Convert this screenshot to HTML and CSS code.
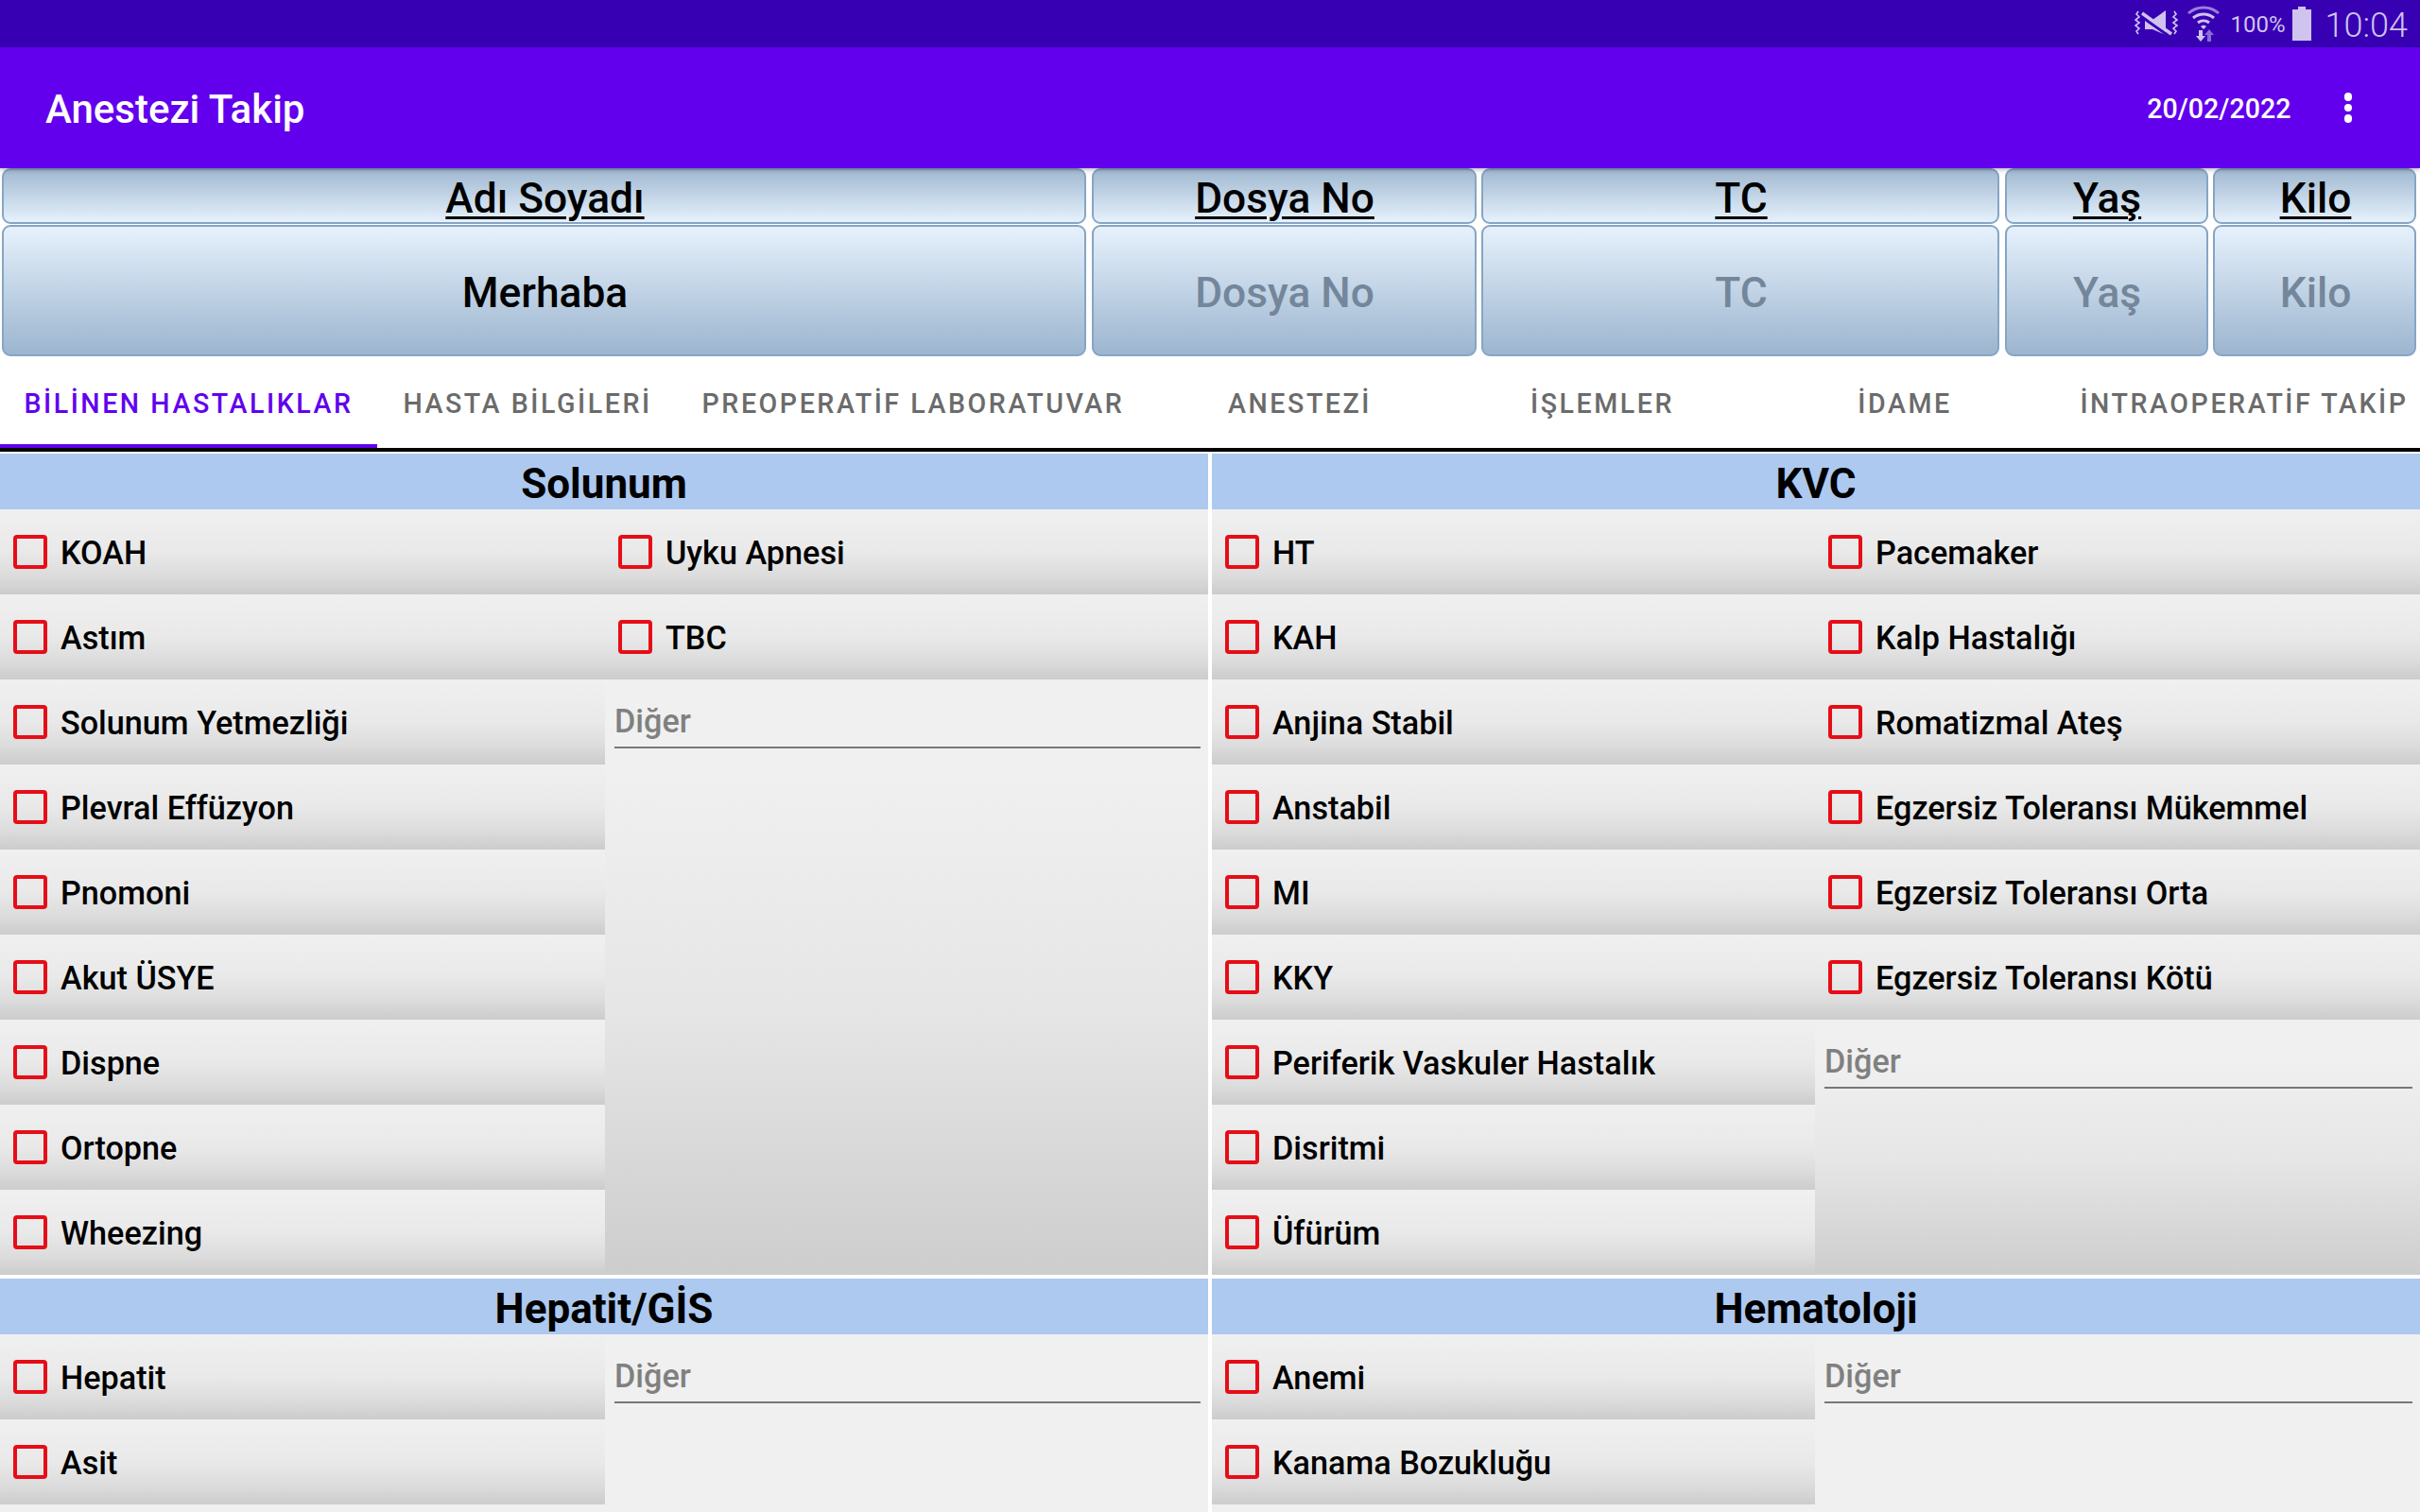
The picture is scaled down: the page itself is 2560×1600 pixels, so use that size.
FILE: index.html
```html
<!DOCTYPE html>
<html lang="tr">
<head>
  <meta charset="UTF-8" />
  <title>Anestezi Takip</title>
  <link rel="stylesheet" href="styles.css">
</head>
<body>

  <div class="status-bar">
    <svg class="st-mute" width="48" height="32" viewBox="0 0 48 32">
      <path d="M11 12h8L33 2v26L19 22h-8z" fill="#d0c3ee"/>
      <path d="M8 9l31 22" stroke="#3700b3" stroke-width="3"/>
      <path d="M8 5l31 22" stroke="#d0c3ee" stroke-width="3.5"/>
      <path d="M4 3L2 6l3 3-4 3 4 3-4 3 4 3-3 3 2 3M42 3l2 3-3 3 4 3-4 3 4 3-4 3 3 3-2 3" fill="none" stroke="#d0c3ee" stroke-width="1.6"/>
    </svg>
    <svg class="st-wifi" width="34" height="38" viewBox="0 0 34 38">
      <path d="M1 8a24 24 0 0 1 32 0" fill="none" stroke="#9a7fdc" stroke-width="3"/>
      <path d="M6 13a17 17 0 0 1 22 0" fill="none" stroke="#d0c3ee" stroke-width="3"/>
      <path d="M11 18a10 10 0 0 1 12 0" fill="none" stroke="#d0c3ee" stroke-width="3"/>
      <path d="M14 22a4 4 0 0 1 6 0l-3 3z" fill="#d0c3ee"/>
      <path d="M12 26h4v6h3l-5 6-5-6h3z" fill="#d0c3ee"/>
      <path d="M21 38v-7h-3l5-6 5 6h-3v7z" fill="#8a6cd6"/>
    </svg>
    <span class="st-pct">100%</span>
    <svg class="st-batt" width="20" height="36" viewBox="0 0 20 36">
      <path d="M6 0h8v3h6v33H0V3h6z" fill="#d0c3ee"/>
    </svg>
    <span class="st-time">10:04</span>
  </div>

  <div class="app-bar">
    <div class="app-title">Anestezi Takip</div>
    <div class="app-date">20/02/2022</div>
    <div class="app-menu"><i></i><i></i><i></i></div>
  </div>

  <div class="patient">
    <div class="cell cell-top">Adı Soyadı</div>
    <div class="cell cell-top">Dosya No</div>
    <div class="cell cell-top">TC</div>
    <div class="cell cell-top">Yaş</div>
    <div class="cell cell-top">Kilo</div>
    <div class="cell cell-val">Merhaba</div>
    <div class="cell cell-val hint">Dosya No</div>
    <div class="cell cell-val hint">TC</div>
    <div class="cell cell-val hint">Yaş</div>
    <div class="cell cell-val hint">Kilo</div>
  </div>

  <div class="tabs">
    <div class="tab tab-1 active">BİLİNEN HASTALIKLAR</div>
    <div class="tab tab-2">HASTA BİLGİLERİ</div>
    <div class="tab tab-3">PREOPERATİF LABORATUVAR</div>
    <div class="tab tab-4">ANESTEZİ</div>
    <div class="tab tab-4">İŞLEMLER</div>
    <div class="tab tab-4">İDAME</div>
    <div class="tab tab-5">İNTRAOPERATİF TAKİP</div>
  </div>

  <div class="sections">
    <section class="section">
      <h2>Solunum</h2>
      <div class="cols cols-left">
        <div class="col">
          <label class="row"><span class="box"></span>KOAH</label>
          <label class="row"><span class="box"></span>Astım</label>
          <label class="row"><span class="box"></span>Solunum Yetmezliği</label>
          <label class="row"><span class="box"></span>Plevral Effüzyon</label>
          <label class="row"><span class="box"></span>Pnomoni</label>
          <label class="row"><span class="box"></span>Akut ÜSYE</label>
          <label class="row"><span class="box"></span>Dispne</label>
          <label class="row"><span class="box"></span>Ortopne</label>
          <label class="row"><span class="box"></span>Wheezing</label>
        </div>
        <div class="col">
          <label class="row"><span class="box"></span>Uyku Apnesi</label>
          <label class="row"><span class="box"></span>TBC</label>
          <div class="rest"><div class="other">Diğer</div></div>
        </div>
      </div>
    </section>

    <section class="section">
      <h2>KVC</h2>
      <div class="cols cols-right">
        <div class="col">
          <label class="row"><span class="box"></span>HT</label>
          <label class="row"><span class="box"></span>KAH</label>
          <label class="row"><span class="box"></span>Anjina Stabil</label>
          <label class="row"><span class="box"></span>Anstabil</label>
          <label class="row"><span class="box"></span>MI</label>
          <label class="row"><span class="box"></span>KKY</label>
          <label class="row"><span class="box"></span>Periferik Vaskuler Hastalık</label>
          <label class="row"><span class="box"></span>Disritmi</label>
          <label class="row"><span class="box"></span>Üfürüm</label>
        </div>
        <div class="col">
          <label class="row"><span class="box"></span>Pacemaker</label>
          <label class="row"><span class="box"></span>Kalp Hastalığı</label>
          <label class="row"><span class="box"></span>Romatizmal Ateş</label>
          <label class="row"><span class="box"></span>Egzersiz Toleransı Mükemmel</label>
          <label class="row"><span class="box"></span>Egzersiz Toleransı Orta</label>
          <label class="row"><span class="box"></span>Egzersiz Toleransı Kötü</label>
          <div class="rest"><div class="other">Diğer</div></div>
        </div>
      </div>
    </section>

    <section class="section">
      <h2>Hepatit/GİS</h2>
      <div class="cols cols-left">
        <div class="col">
          <label class="row"><span class="box"></span>Hepatit</label>
          <label class="row"><span class="box"></span>Asit</label>
        </div>
        <div class="col">
          <div class="other">Diğer</div>
        </div>
      </div>
    </section>

    <section class="section">
      <h2>Hematoloji</h2>
      <div class="cols cols-right">
        <div class="col">
          <label class="row"><span class="box"></span>Anemi</label>
          <label class="row"><span class="box"></span>Kanama Bozukluğu</label>
        </div>
        <div class="col">
          <div class="other">Diğer</div>
        </div>
      </div>
    </section>
  </div>

</body>
</html>
```

FILE: styles.css
```css
* {
  box-sizing: border-box;
}

body {
  margin: 0;
  width: 2560px;
  height: 1600px;
  overflow: hidden;
  background: #fff;
  font-family: Roboto, sans-serif;
  font-weight: 500;
  color: #000;
}

.status-bar {
  display: flex;
  align-items: center;
  justify-content: flex-end;
  height: 50px;
  padding-right: 13px;
  background: #3700b3;
  color: #d0c3ee;
}

.st-mute { margin-right: 8px; }
.st-wifi { margin-right: 12px; }

.st-pct {
  font-size: 24px;
  font-weight: 400;
  margin: 1px 7px 0 0;
}

.st-batt { margin-right: 15px; }

.st-time {
  margin-top: 3px;
  font-size: 36px;
  font-weight: 300;
}

.app-bar {
  position: relative;
  display: flex;
  align-items: center;
  height: 128px;
  padding-left: 48px;
  background: #6200ee;
  color: #fff;
  box-shadow: 0 2px 4px rgba(0, 0, 0, .25);
}

.app-title {
  flex: 1;
  padding-top: 3px;
  font-size: 42px;
}

.app-date {
  padding-top: 2px;
  font-size: 28.6px;
  margin-right: 56px;
}

.app-menu {
  display: flex;
  flex-direction: column;
  gap: 3px;
  margin-right: 72px;
}

.app-menu i {
  width: 8.5px;
  height: 8.5px;
  border-radius: 50%;
  background: #fff;
}

.patient {
  display: grid;
  grid-template-columns: 1147px 407px 548px 215px 215px;
  grid-template-rows: 59px 140px;
  column-gap: 5.5px;
  height: 199px;
  padding: 0 2px;
}

.cell {
  display: flex;
  align-items: center;
  justify-content: center;
  padding: 5px 0 0 2px;
  border: 2px solid #86a5c4;
  border-radius: 9px;
  font-size: 44.3px;
}

.cell-top {
  text-decoration: underline;
  text-decoration-thickness: 3px;
  text-underline-offset: 4px;
  background: linear-gradient(#a1b9d1, #e6f1fc);
}

.cell-val {
  margin-top: 1px;
  background: linear-gradient(#e6f1fc, #9cb5cf);
}

.hint {
  color: #74869a;
}

.tabs {
  display: flex;
  height: 101px;
  overflow: hidden;
  border-bottom: 4px solid #000;
}

.tab {
  display: flex;
  align-items: center;
  justify-content: center;
  flex: none;
  padding-top: 3px;
  font-size: 28.6px;
  letter-spacing: 2.55px;
  color: #6b6b6b;
}

.tab-1 { width: 399px; }
.tab-2 { width: 318px; }
.tab-3 { width: 498px; }
.tab-4 { width: 320px; }
.tab-5 { width: 398px; }

.tab.active {
  color: #6200ee;
  box-shadow: inset 0 -4px 0 #6200ee;
}

.sections {
  display: grid;
  grid-template-columns: 1278px 1278px;
  grid-template-rows: 869px 1fr;
  column-gap: 4px;
  row-gap: 4px;
  height: 1122px;
  padding-top: 2px;
}

.section {
  display: flex;
  flex-direction: column;
}

.section h2 {
  flex: none;
  margin: 0;
  height: 59px;
  padding-top: 3px;
  line-height: 59px;
  text-align: center;
  font-size: 44px;
  font-weight: 700;
  background: #adc9ef;
}

.cols {
  display: grid;
  flex: 1;
  background: #f0f0f0;
}

.cols-left { grid-template-columns: 640px 638px; }
.cols-right { grid-template-columns: 638px 640px; }

.col {
  display: flex;
  flex-direction: column;
}

.row {
  display: flex;
  align-items: center;
  flex: none;
  height: 90px;
  padding: 2px 0 0 14px;
  font-size: 34.2px;
  background: linear-gradient(#f0f0f0, #e9e9e9 50%, #dcdcdc 78%, #cccccc);
}

.box {
  flex: none;
  width: 36px;
  height: 36px;
  margin: -2px 14px 0 0;
  border: 4px solid #e60d17;
  border-radius: 4px;
}

.rest {
  flex: 1;
  background: linear-gradient(#f0f0f0 15%, #e6e6e6 55%, #cdcdcd);
}

.other {
  flex: none;
  height: 73px;
  margin: 0 8px 0 10px;
  padding-top: 24px;
  border-bottom: 2px solid #777;
  font-size: 34.2px;
  color: #808080;
}
```
